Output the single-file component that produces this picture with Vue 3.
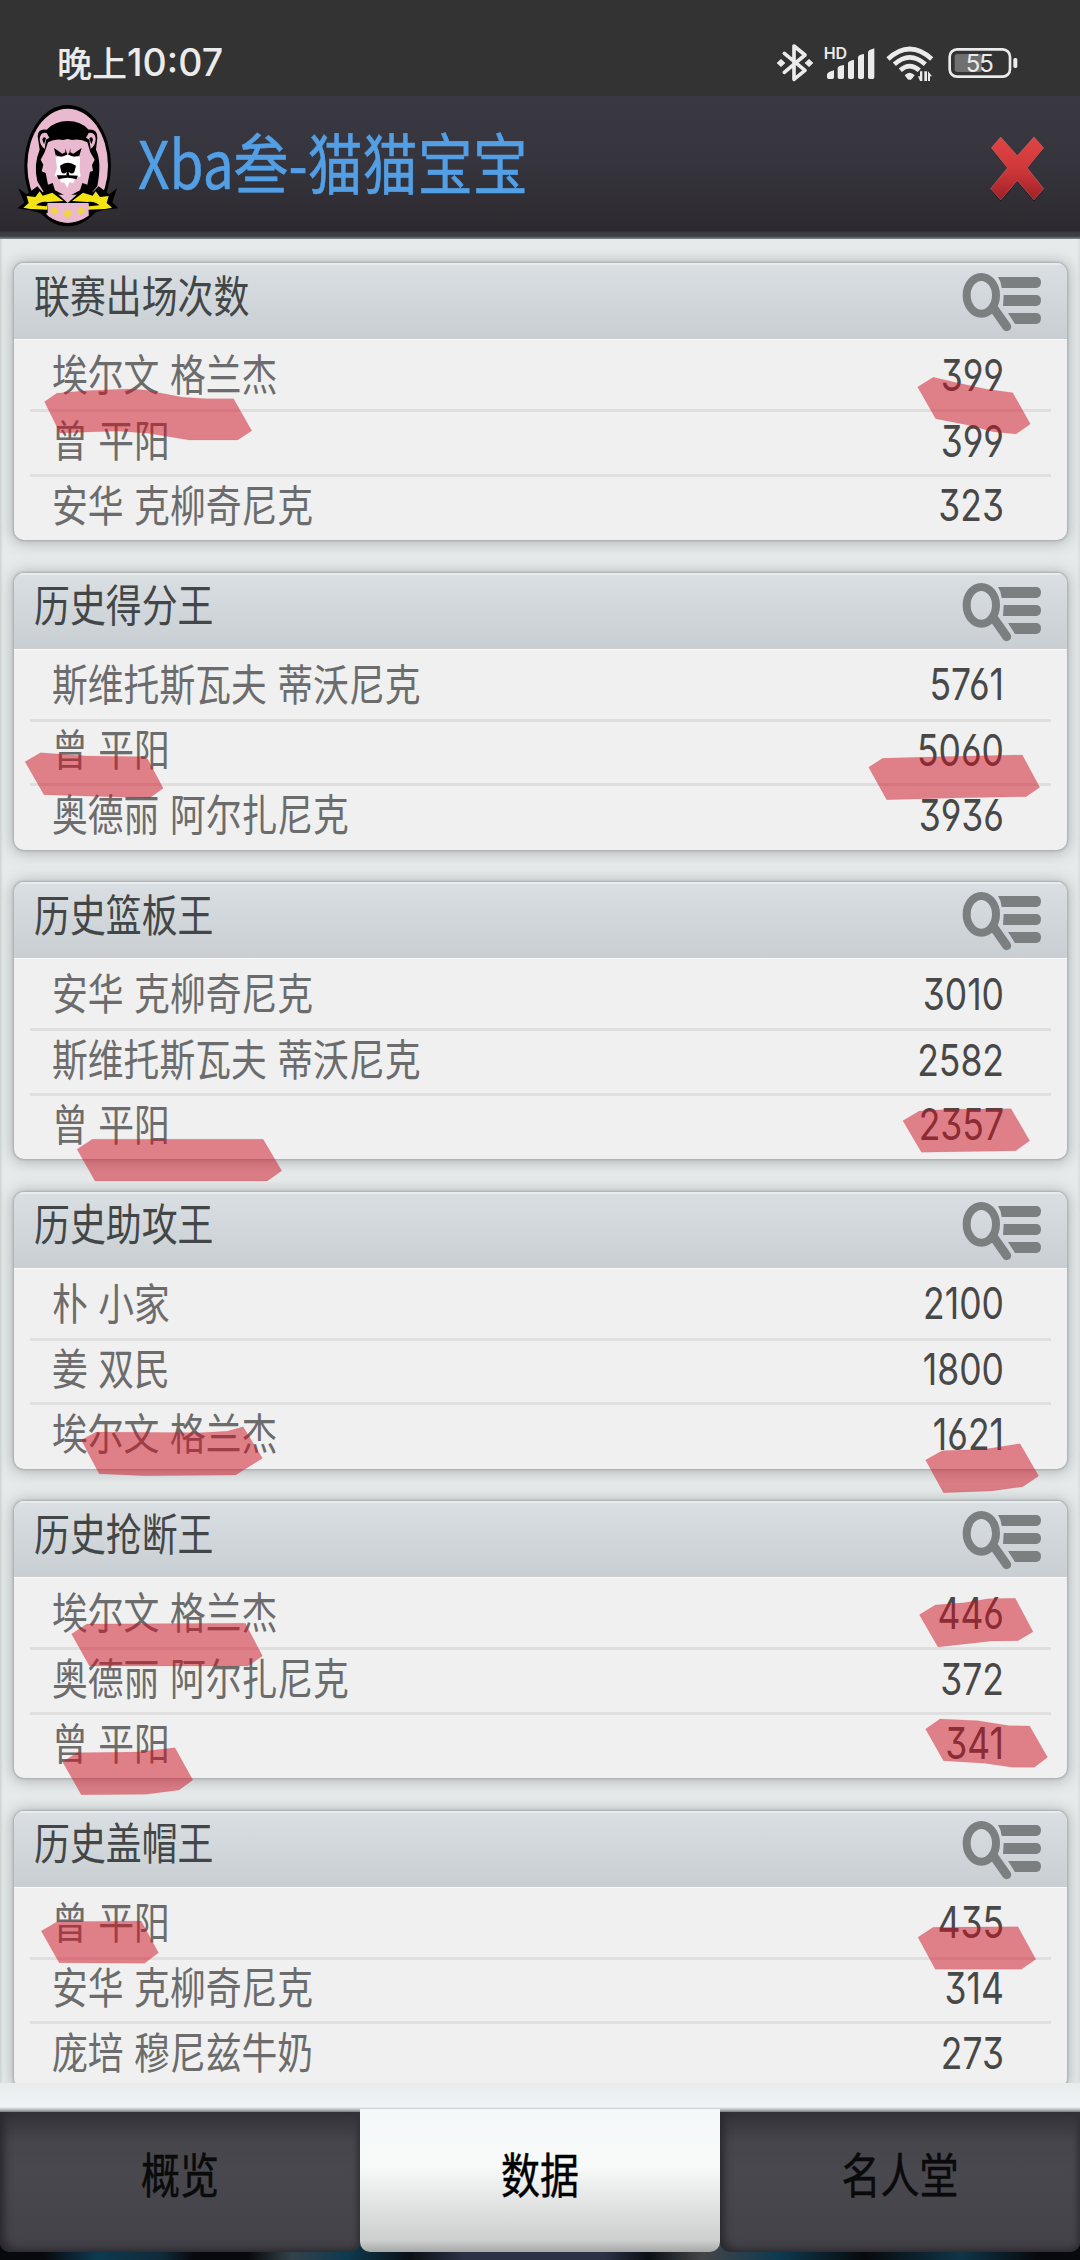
<template>
  <div class="screen">
    <div class="status-bar">
      <div class="clock"><span class="day">晚上</span><span class="time">10:07</span></div>
      <div class="status-icons">
        <svg class="bt" width="36" height="40" viewBox="114 129 108 120">
          <path d="M136 160 L198 211 L165 238 V138 L198 165 L136 217" fill="none" stroke="#ebebeb" stroke-width="11" stroke-linejoin="round" stroke-linecap="round" />
          <path d="M114 189 l12 -11 l12 11 l-12 11z M198 189 l12 -11 l12 11 l-12 11z" fill="#ebebeb" stroke="#ebebeb" stroke-width="2" stroke-linejoin="round" />
        </svg>
        <svg class="signal" width="51" height="40" viewBox="254 129 153 120">
          <text x="253" y="177" class="hd">HD</text>
          <path d="M263 224 Q263 217 284 211 V232 Q284 237 279 237 H268 Q263 237 263 232z M295 204 Q295 198 314 195 V232 Q314 237 309 237 H300 Q295 237 295 232z M326 190 Q326 183 344 179 V232 Q344 237 339 237 H331 Q326 237 326 232z M356 172 Q356 165 374 162 V232 Q374 237 369 237 H361 Q356 237 356 232z M386 157 Q386 150 405 145 V232 Q405 237 400 237 H391 Q386 237 386 232z" fill="#ebebeb" />
        </svg>
        <svg class="wifi" width="48" height="40" viewBox="441 129 144 120">
          <g fill="none" stroke="#ebebeb" stroke-width="14">
            <path d="M447 177 Q512 117 578 177" />
            <path d="M466 193 Q512 151 559 193" />
            <path d="M484 211 Q512 186 541 211" />
          </g>
          <path d="M497 226 Q512 211 527 226 L519 236 Q512 243 505 236z" fill="#ebebeb" />
          <path d="M550 214 V243 H543 L537 229 H543 V214z M556 243 V214 H564 V243z M567 214 L579 229 H573 V243 H567z" fill="#ebebeb" />
        </svg>
        <svg class="battery" width="70" height="40" viewBox="626 129 210 120">
          <rect x="646" y="162" width="82" height="54" rx="8" fill="#707070" />
          <rect x="631" y="148" width="181" height="82" rx="22" fill="none" stroke="#ebebeb" stroke-width="8" />
          <rect x="822" y="174" width="12" height="30" rx="5" fill="#ebebeb" />
          <text x="720" y="215" class="percent" text-anchor="middle">55</text>
        </svg>
      </div>
    </div>

    <div class="header">
      <svg class="logo" width="103" height="125" viewBox="48 40 309 375">
        <ellipse cx="203" cy="228" rx="130" ry="182" fill="#000" />
        <ellipse cx="203" cy="228" rx="121" ry="171" fill="#e8b9cf" />
        <path d="M113 140 Q113 116 140 120 Q165 94 203 94 Q243 94 266 120 Q293 118 292 145 L288 180 Q306 215 292 290 L270 315 H136 L112 275 Q100 225 119 180z" fill="#000" />
        <path d="M119 150 Q120 126 140 130 L148 144 L138 150 L134 178 Q121 168 119 150z M287 150 Q286 126 266 130 L258 144 L268 150 L272 178 Q285 168 287 150z" fill="#e8b9cf" />
        <path d="M127 150 Q130 138 138 146 L132 164z M279 150 Q276 138 268 146 L274 164z" fill="#000" />
        <path d="M144 158 Q165 146 190 151 L203 148 L216 151 Q241 146 262 158 L271 188 L284 210 L276 226 L279 244 L270 246 L262 285 L247 280 L240 302 L203 322 L165 302 L158 280 L144 285 L137 250 L125 245 L130 225 L122 210 L134 188z" fill="#e8b9cf" />
        <path d="M162 175 L187 192 L196 188 V175 L200 190 L203 194 L208 190 L211 175 V188 L220 192 L245 175 L238 198 L222 201 L203 195 L184 201 L167 197z" fill="#000" />
        <path d="M167 202 L190 201 L203 194 L217 201 L240 202 L239 240 L242 260 L228 265 L220 280 L208 278 L202 295 L193 279 L183 278 L177 264 L164 258 L171 235z" fill="#fff" />
        <path d="M180 228 Q203 211 228 228 L223 247 Q216 257 206 246 L208 257 L234 258 L229 269 Q203 260 176 269 L170 257 L199 257 L200 246 Q191 257 184 247z" fill="#000" />
        <path d="M55 296 L80 314 L112 290 L128 308 L160 301 L203 340 L246 301 L278 308 L296 290 L328 314 L351 296 L337 338 L355 356 L313 360 L268 374 L248 363 H157 L134 374 L90 362 L52 356 L73 339z" fill="#000" />
        <path d="M80 319 L106 322 L119 305 L128 318 L157 309 L190 334 L143 337 L142 360 L91 358 L70 354 L86 340z M326 319 L300 322 L287 305 L278 318 L249 309 L216 334 L263 337 L264 360 L315 358 L336 354 L320 340z" fill="#f4e414" />
        <path d="M108 347 Q120 334 145 337 L139 350z M298 347 Q286 334 261 337 L267 350z" fill="#000" />
        <path d="M143 340 H266 V378 Q203 420 143 378z" fill="#e8b9cf" />
        <path d="M163 350 l13 13 l-13 13 l-13 -13z M203 358 l14 14 l-14 14 l-14 -14z M243 350 l13 13 l-13 13 l-13 -13z" fill="#f1d446" />
      </svg>
      <h1><span class="tall">Xba叁-猫猫宝宝</span></h1>
      <svg class="close" width="60" height="72" viewBox="745 402 180 216">
        <defs>
          <linearGradient id="closeFill" x1="0" y1="0" x2="0" y2="1">
            <stop offset="0" stop-color="#e14545" />
            <stop offset=".55" stop-color="#cd3638" />
            <stop offset="1" stop-color="#9c2226" />
          </linearGradient>
        </defs>
        <path d="M783 415 L833 471 L883 415 L912 448 L863 508 L912 570 L883 605 L833 546 L783 605 L753 570 L803 508 L755 448z" fill="#201c20" />
        <path d="M783 411 L833 467 L883 411 L912 444 L863 504 L912 566 L883 600 L833 542 L783 600 L753 566 L803 504 L755 444z" fill="url(#closeFill)" stroke="#d98082" stroke-width="2" stroke-opacity=".6" />
      </svg>
    </div>

    <div class="content">
      <div class="card" v-for="card in cards" :key="card.title">
        <div class="card-head">
          <span class="tall">{{ card.title }}</span>
          <svg width="80" height="60" viewBox="488 68 240 180">
            <path d="M584 178 L622 232" stroke="#7b7f80" stroke-width="27" stroke-linecap="round" />
            <ellipse cx="546" cy="138" rx="44" ry="55" fill="none" stroke="#7b7f80" stroke-width="24" />
            <path d="M596 83 H712 Q725 85 725 99 Q725 114 712 116 H607 Q606 98 596 83z M613 137 H712 Q725 139 725 153 Q725 168 712 170 H611z M626 191 H712 Q725 193 725 207 Q725 222 712 224 H647z" fill="#7b7f80" />
          </svg>
        </div>
        <div class="row" v-for="(row, i) in card.rows" :key="i">
          <span class="name tall">{{ row[0] }}</span>
          <span class="value">{{ row[1] }}</span>
        </div>
      </div>
    </div>

    <div class="tabs">
      <div v-for="tab in tabs" :key="tab" class="tab" :class="{ active: tab === current }" @click="current = tab">
        <span class="tall">{{ tab }}</span>
      </div>
    </div>

    <!-- highlighter strokes over the lists -->
    <svg class="marks" width="1080" height="2260" viewBox="0 0 1080 2260">
      <polygon v-for="(m, i) in marks" :key="i" :points="m" />
    </svg>
  </div>
</template>

<script setup>
import { ref } from 'vue';

const tabs = ['概览', '数据', '名人堂'];
const current = ref('数据');

const cards = [
  { title: '联赛出场次数', rows: [['埃尔文 格兰杰', 399], ['曾 平阳', 399], ['安华 克柳奇尼克', 323]] },
  { title: '历史得分王', rows: [['斯维托斯瓦夫 蒂沃尼克', 5761], ['曾 平阳', 5060], ['奥德丽 阿尔扎尼克', 3936]] },
  { title: '历史篮板王', rows: [['安华 克柳奇尼克', 3010], ['斯维托斯瓦夫 蒂沃尼克', 2582], ['曾 平阳', 2357]] },
  { title: '历史助攻王', rows: [['朴 小家', 2100], ['姜 双民', 1800], ['埃尔文 格兰杰', 1621]] },
  { title: '历史抢断王', rows: [['埃尔文 格兰杰', 446], ['奥德丽 阿尔扎尼克', 372], ['曾 平阳', 341]] },
  { title: '历史盖帽王', rows: [['曾 平阳', 435], ['安华 克柳奇尼克', 314], ['庞培 穆尼兹牛奶', 273]] },
];

const marks = [
  '44.5,401.7 56.8,393.3 86,390.7 127.4,389 144.6,390 182.5,397.3 206.6,398.7 233.5,398.7 251.7,430.7 237.6,440 189.4,440 148,433.3 117,431 60,433',
  '917.7,387 933.3,377.3 956.7,382.7 986.7,389.3 1012.7,392.7 1030.3,424 1016,434 993.3,431.7 966.7,424.7 935.7,418.7',
  '25.1,761.7 40.6,752.7 86,756 143,756.7 147.4,758.7 163.2,788.3 149.8,797.7 110.2,796.7 44,794.7',
  '868.7,767.3 882.7,758.3 940,756.7 1022.3,755 1039.7,787.3 1026,796.7 960,797.7 886.7,799.7',
  '77.1,1149.3 92.3,1139.3 263.1,1139.3 281.7,1170.7 267.2,1181 95,1181',
  '902.9,1120.7 919.4,1111 950.4,1109.3 1011,1108.7 1029.6,1140.7 1015.8,1150.7 921.5,1152.3',
  '81.3,1440 96.4,1432 199.7,1432.7 227.3,1431.3 243.1,1426.7 262.4,1458.3 235.5,1475 144.6,1475.7 99.2,1473.7',
  '925.6,1460 942.1,1450.7 984.8,1449.3 1020,1443.7 1038.6,1476 1022.7,1486.7 991.7,1491 943.5,1492.7',
  '71.6,1634 86.8,1624 245.2,1623.3 262.4,1656 247.9,1666 89.5,1666',
  '919.4,1614.7 935.3,1605 964.2,1602.7 988.3,1598.7 1015.2,1598.3 1033,1631.7 1017.9,1640.7 991.7,1641 938,1647',
  '62.7,1762 77.1,1752.7 137.7,1752 174.9,1747.7 192.8,1780 179,1790 146,1794.3 81.3,1794.7',
  '925.6,1729 940,1719 978,1720.7 1009,1725.7 1029.6,1726 1047.5,1757.3 1034.4,1767.3 1012.4,1767.3 984.8,1763.3 943.5,1760.7',
  '41.3,1931 57.2,1921.7 141.2,1921 158.4,1952.7 144.6,1963.3 59.2,1962.7',
  '918,1937.3 933.2,1927.3 1017.9,1926.7 1035.8,1959.3 1021.3,1969.3 935.3,1969.3',
];
</script>

<style>
body {
  margin: 0;
  background: #333;
}
</style>

<style scoped>
.screen {
  position: relative;
  width: 1080px;
  height: 2260px;
  overflow: hidden;
  display: flex;
  flex-direction: column;
  font-family: "Noto Sans CJK SC", sans-serif;
  line-height: 1;
}
svg {
  display: block;
  flex: none;
}
.tall {
  display: inline-block;
  transform: scaleY(1.22);
  white-space: pre;
}
.status-bar {
  height: 96px;
  flex: none;
  box-sizing: border-box;
  padding: 43px 62px 0 57px;
  display: flex;
  justify-content: space-between;
  background: #333;
  color: #ebebeb;
}
.clock {
  display: flex;
  align-items: center;
  height: 40px;
  font-size: 35px;
  font-weight: 500;
}
.day {
  margin-bottom: 4px;
}
.time {
  font-family: Inter, sans-serif;
  font-size: 37.5px;
  font-weight: 500;
}
.status-icons {
  display: flex;
}
.signal {
  margin-left: 11px;
}
.wifi {
  margin-left: 11px;
}
.battery {
  margin-left: 14px;
}
.hd {
  font: 600 48px Inter, sans-serif;
  fill: #ebebeb;
}
.percent {
  font: 400 72px Inter, sans-serif;
  letter-spacing: -3px;
  fill: #ebebeb;
}
.header {
  height: 143px;
  flex: none;
  box-sizing: border-box;
  padding: 7px 32px 0 16px;
  display: flex;
  align-items: flex-start;
  background: linear-gradient(#3a3843, #36353d 45%, #2d2a2f 94%, #3b3f44 96%, #3b3f44 98%, #85898b);
}
h1 {
  flex: 1;
  margin: 31px 0 0 19px;
  font-size: 55px;
  font-weight: 400;
  color: #529fe6;
  -webkit-text-stroke: .5px #529fe6;
}
h1 .tall {
  transform: scaleY(1.19);
}
.close {
  margin-top: 31px;
}
.content {
  height: 1844px;
  flex: none;
  box-sizing: border-box;
  overflow: hidden;
  padding: 24px 13px 0 14px;
  background: linear-gradient(90deg, #cfd3d4, #e6eaeb 3px, #e6eaeb 1077px, #d9dddf);
}
.card {
  height: 277px;
  margin-bottom: 32.5px;
  border-radius: 10px;
  background: #f0f0f0;
  box-shadow: 0 0 2px 1px #a9adae, 0 1px 14px 2px rgba(110, 116, 118, .45);
  overflow: hidden;
}
.card-head {
  height: 77px;
  box-sizing: border-box;
  padding: 0 25px 0 20px;
  display: flex;
  justify-content: space-between;
  align-items: center;
  background: linear-gradient(#d9dfe2, #c8ced2);
  box-shadow: inset 0 2px 1px #e8edef;
  border-bottom: 1px solid #fafafa;
  font-size: 35.9px;
  color: #424647;
}
.card-head .tall {
  margin-bottom: 13px;
}
.card-head svg {
  margin-top: 2px;
}
.row {
  height: 64.7px;
  box-sizing: border-box;
  margin: 0 16px;
  padding: 0 47px 0 22px;
  display: flex;
  justify-content: space-between;
  align-items: center;
  font-size: 35.8px;
  color: #6c6c6c;
}
.row:nth-child(2) {
  height: 69px;
  padding-top: 5px;
}
.row + .row {
  border-top: 3px solid #dfdfdf;
}
.name {
  word-spacing: 2.5px;
  margin-bottom: 8px;
}
.value {
  margin-bottom: 3px;
  font-family: Inter, sans-serif;
  font-size: 35.5px;
  font-feature-settings: "cv03", "cv04", "cv09";
  color: #484848;
  transform: scaleY(1.25);
}
.tabs {
  flex: 1;
  display: flex;
  padding-bottom: 8px;
  background:
    linear-gradient(#e9eced, #eff3f5 24px, #b0b3b5 27px, #77797b 29px, transparent 29px),
    linear-gradient(90deg, #08090c 4%, #0e3a50 9%, #102a3a 15%, #08090c 18% 23%, #34424a 27%, #0e3a50 32%, #0b1015 38%, #2c3146 43% 56%, #0b1015 60%, #444548 65%, #0e3a50 72%, #08090c 80%, #0f3548 89%, #08090c 96%);
}
.tab {
  flex: 1;
  display: flex;
  align-items: center;
  justify-content: center;
  margin-top: 29px;
  padding-bottom: 19px;
  box-sizing: border-box;
  border-radius: 0 0 10px 10px;
  background: linear-gradient(#323136, #46454b 30px, #49484e 60px, #434248);
  box-shadow: inset 8px -6px 9px -4px #29282d, inset -3px 0 5px #333238;
  font-size: 39px;
  color: #0a0a0b;
  -webkit-text-stroke: .4px #0a0a0b;
}
.tab.active {
  margin-top: 26px;
  padding-bottom: 16px;
  background: linear-gradient(#f5f8f9, #f8faf9 40%, #cdcfce 92%, #a5a8a7);
  box-shadow: none;
  color: #000;
}
.marks {
  position: absolute;
  left: 0;
  top: 0;
  pointer-events: none;
}
.marks polygon {
  fill: rgba(206, 16, 32, .5);
  stroke: rgba(206, 16, 32, .1);
  stroke-linejoin: round;
}
</style>
